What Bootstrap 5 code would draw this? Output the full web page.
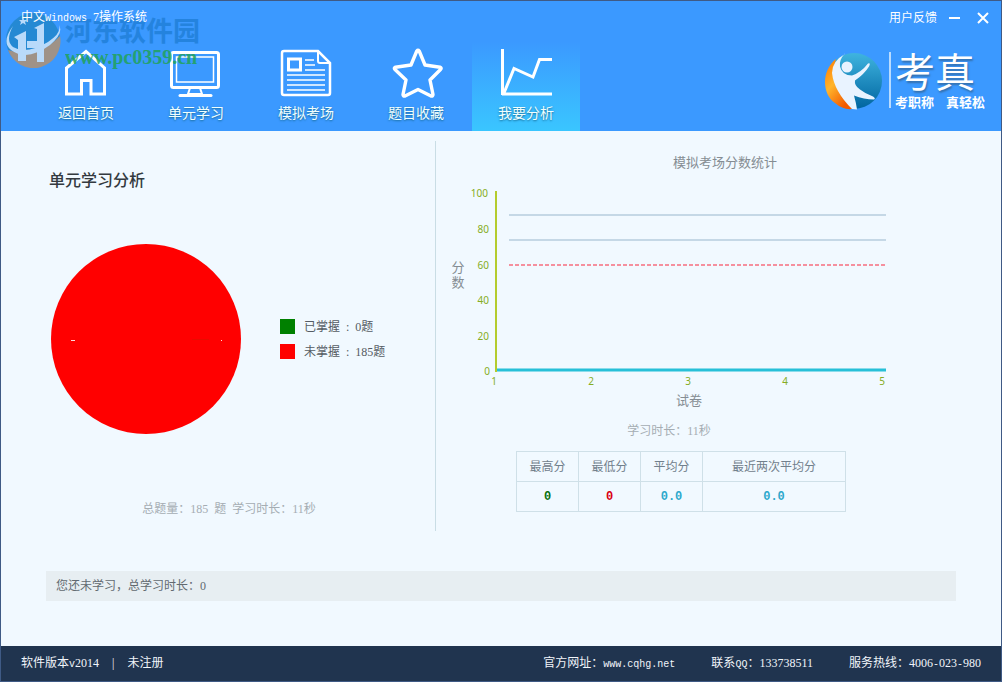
<!DOCTYPE html>
<html lang="zh-CN">
<head>
<meta charset="utf-8">
<meta name="viewport" content="width=device-width, initial-scale=1">
<title>考真 - 我要分析</title>
<link rel="stylesheet" href="https://cdn.jsdelivr.net/npm/bootstrap@5.3.0/dist/css/bootstrap.min.css">
<style>
body{font-family:"Liberation Serif","Noto Sans CJK SC",sans-serif;font-size:12px;line-height:16px;background:#f1f9ff;color:#555c63}
.latin{font-family:"Liberation Mono",monospace;font-size:10px}
.app-frame{border:1px solid #3f5a85;min-height:100vh}
.app-header{background:#3b99ff;color:#fff}
.title-bar{height:30px;padding:4px 12px 0 20px}
.title-bar button{width:12px;height:12px}
.title-text{z-index:2}
.main-nav{padding-left:30px}
.nav-tile{width:108px;height:100px;margin:0 1px;padding-top:16px;color:#f0ffff;font:14px/22px "Noto Sans CJK SC",sans-serif;text-decoration:none;text-shadow:0 1px 2px #14688f}
.nav-tile:hover{color:#fff}
.nav-tile.active{background:linear-gradient(#3b99ff 10%,#3ac6ff)}
.brand-logo{margin:21px 16px 0 0}
.brand-name{font:40px/44px "Noto Sans CJK SC",sans-serif;margin-top:-4px;text-shadow:1px 2px 2px #3570ad}
.brand-line{font:bold 13px/20px "Noto Sans CJK SC",sans-serif;gap:12px}
.brand-text{border-left:2px solid #b9dcff;padding-left:4px;height:56px}
.site-mark{left:4px;top:11px;pointer-events:none}
.site-name{font:bold 27px/36px "Noto Sans CJK SC",sans-serif;color:#1878cd;opacity:.65}
.site-url{font:bold 20px/18px "Liberation Serif",serif;color:#21a35a;opacity:.85}
.panels{display:grid;grid-template-columns:435fr 565fr;padding-top:10px}
.unit-panel{border-right:1px solid #c9dde5;height:390px;padding:28px 26px 0 48px}
.unit-panel h1{font:500 16px/20px "Noto Sans CJK SC",sans-serif;color:#333a40;margin:0}
.pie-row{margin-top:55px;padding-left:2px;gap:39px}
.swatch{width:15px;height:15px}
.legend-list{gap:9px}
.legend-list>div{gap:9px}
.faint{color:#a5adb3}
.unit-total{margin-top:67px}
.exam-panel{padding:13px 0 0 16px}
.exam-body{width:434px;max-width:100%}
.exam-title{font-size:13px;line-height:18px;color:#858d93;padding-left:112px}
.exam-plot{margin-top:-2px}
.exam-time{margin-top:13px}
.score-table{width:330px;margin:12px 0 0 64px;table-layout:fixed}
.score-table th,.score-table td{height:30px;padding:0;border:1px solid #cfe0e8;text-align:center;vertical-align:middle}
.score-table th{font-weight:400;color:#71808c}
.score-table td{font:bold 12px/16px "Liberation Mono",monospace}
.axis-text{font:10px "Noto Sans",sans-serif;fill:#86ad24}
.axis-name{font:13px "Noto Sans CJK SC",sans-serif;fill:#858d93}
.notice{margin:40px 45px 0;padding:7px 10px;background:#e7eef2;color:#626a70}
.app-footer{background:#20344f;color:#f1f5fa;height:35px;padding:1px 20px 0}
.footer-info{gap:13px}
.footer-links{gap:36px}
</style>
</head>
<body>
<div class="app-frame d-flex flex-column position-relative">
<header class="app-header">
  <div class="title-bar d-flex align-items-center justify-content-between">
    <div class="title-text position-relative">中文<span class="latin">Windows</span>&nbsp; 7操作系统</div>
    <div class="d-flex align-items-center">
      <a href="#" class="text-white text-decoration-none me-2">用户反馈</a>
      <button type="button" class="btn p-0 border-0 d-flex ms-1" aria-label="最小化"><svg width="12" height="12"><path d="M0 6h11" stroke="#fff" stroke-width="2"/></svg></button>
      <button type="button" class="btn p-0 border-0 d-flex ms-3" aria-label="关闭"><svg width="12" height="12"><path d="M1 1l10 10M11 1L1 11" stroke="#fff" stroke-width="2"/></svg></button>
    </div>
  </div>
  <div class="d-flex justify-content-between">
    <nav class="main-nav d-flex">
      <a class="nav-tile d-flex flex-column align-items-center" href="#"><svg width="54" height="54" viewBox="0 0 54 54" fill="none" stroke="#fff" stroke-width="3"><path d="M7.500 47V21L27 4.500 45.500 21v26H32V33.500H22.500V47z"/></svg>返回首页</a>
      <a class="nav-tile d-flex flex-column align-items-center" href="#"><svg width="54" height="54" viewBox="0 0 54 54" fill="none" stroke="#fff" stroke-width="3"><rect x="2.500" y="5.500" width="47" height="35" rx="2"/><rect x="7.500" y="10" width="37" height="25" stroke-width="1.500"/><path d="M21 41l-2 6h14l-2-6" stroke-width="2"/><path d="M11 48.500h31" stroke-linecap="round"/></svg>单元学习</a>
      <a class="nav-tile d-flex flex-column align-items-center" href="#"><svg width="54" height="54" viewBox="0 0 54 54" fill="none" stroke="#fff" stroke-width="2.500"><path d="M39 4H5q-2 0-2 2v40q0 2 2 2h44q2 0 2-2V16z"/><path d="M39 4v10q0 2 2 2h9" stroke-width="2"/><rect x="9.500" y="12" width="12" height="11" stroke-width="3"/><path d="M26 13h9M26 18h10M26 23h20M8 28h38M8 33h38M8 38h38M8 43h38" stroke-width="1.500"/></svg>模拟考场</a>
      <a class="nav-tile d-flex flex-column align-items-center" href="#"><svg width="54" height="54" viewBox="0 0 54 54" fill="none" stroke="#fff" stroke-width="3.400" stroke-linejoin="round"><path d="M27.800 4q1.200-1.500 2.400 0L36 18l15 2.200q2 .8.500 2.300L41 33l3 14.500q0 2-2 1.500L29 42.500 16 49q-2 .5-2-1.500L17 33 6 22.500q-1.500-1.500.5-2.300L22 18z"/></svg>题目收藏</a>
      <a class="nav-tile active d-flex flex-column align-items-center" href="#" aria-current="page"><svg width="54" height="54" viewBox="0 0 54 54" fill="none" stroke="#fff" stroke-width="3"><path d="M3.500 2v46M3 47h50M5 46l10-24.500L34 30l6.500-17.500H53"/></svg>我要分析</a>
    </nav>
    <div class="brand-logo d-flex">
      <svg class="me-1" width="60" height="58" viewBox="0 0 60 58" aria-hidden="true">
        <defs><linearGradient id="bl" x1="0" y1="0" x2="0" y2="1"><stop offset="0" stop-color="#3fb4df"/><stop offset="1" stop-color="#00649f"/></linearGradient><linearGradient id="or" x1="0" y1="0" x2=".6" y2="1"><stop offset="0" stop-color="#ff7600"/><stop offset=".5" stop-color="#ffb52b"/><stop offset="1" stop-color="#f35a00"/></linearGradient></defs>
        <circle cx="29" cy="29" r="28" fill="url(#bl)"/>
        <path d="M11 7C-4 19-3 42 10 51q8 7 17 6L17 36Q6 22 11 7z" fill="url(#or)"/>
        <path d="M20 2Q7 9 7 21q2 18 20 36l5 .5q-1-7-3-14 10 4 20 4 2-1-1-3-8-3-13-7-6-4-5-9 9-6 14-14 2-4-1-3-7 9-16 12-10 0-12-9-1-7 5-13z" fill="#e9f3ff"/>
        <circle cx="22" cy="15" r="5.500" fill="#e9f3ff"/>
      </svg>
      <div class="brand-text"><div class="brand-name">考真</div><div class="brand-line d-flex"><span>考职称</span><span>真轻松</span></div></div>
    </div>
  </div>
</header>

<div class="site-mark position-absolute d-flex" aria-hidden="true">
  <svg width="60" height="58" viewBox="0 0 60 58" opacity=".85">
    <circle cx="28" cy="28" r="27" fill="#2287cc"/>
    <path d="M3 38Q32 48 55 24A27 27 0 0 1 3 38z" fill="#b19173"/>
    <path d="M13 43V28l-4-3 12-6v30h-8M32 50V36H22v-7h10V17l-3-1 10-5v39z" fill="#cfe6fa"/>
    <path d="M8 14Q-4 30 6 38q16 12 39-5 14-12 9-20 3 8-11 17-22 13-35 5-8-6 0-21z" fill="#cfe6fa"/>
    <path d="M18 5l1 3h3l-2 2 1 3-3-2-3 2 1-3-2-2h3z" fill="#cfe6fa"/>
  </svg>
  <div><div class="site-name">河东软件园</div><div class="site-url">www.pc0359.cn</div></div>
</div>

<main class="flex-grow-1">
  <div class="panels">
    <section class="unit-panel">
      <h1>单元学习分析</h1>
      <div class="pie-row d-flex align-items-center">
        <svg width="190" height="190" role="img" aria-label="未掌握 185题"><circle cx="95" cy="95" r="95" fill="red"/><path d="M20 96.500h4M170 96.500h1" stroke="#ffd9d9"/><path d="M141 95.500h17" stroke="#e80c00"/></svg>
        <div class="legend-list d-flex flex-column">
          <div class="d-flex align-items-center"><span class="swatch" style="background:#008000"></span><span>已掌握&nbsp; :&nbsp; 0题</span></div>
          <div class="d-flex align-items-center"><span class="swatch" style="background:#ff0000"></span><span>未掌握&nbsp; :&nbsp; 185题</span></div>
        </div>
      </div>
      <div class="unit-total faint text-center">总题量：185&nbsp; 题&nbsp; 学习时长：11秒</div>
    </section>
    <section class="exam-panel">
      <div class="exam-body">
        <div class="exam-title text-center">模拟考场分数统计</div>
        <svg class="exam-plot d-block" width="434" height="240" viewBox="0 0 434 240" role="img" aria-label="模拟考场分数统计">
          <g class="axis-text" text-anchor="end"><text x="36" y="27">100</text><text x="37" y="63">80</text><text x="37" y="99">60</text><text x="37" y="134">40</text><text x="37" y="170">20</text><text x="38" y="205">0</text></g>
          <g class="axis-text" text-anchor="middle"><text x="42" y="215">1</text><text x="139" y="215">2</text><text x="236" y="215">3</text><text x="333" y="215">4</text><text x="430" y="215">5</text></g>
          <path d="M57 45h377M57 70h377" stroke="#c5d8e6" stroke-width="2"/>
          <path d="M57 95h377" stroke="#f5909e" stroke-width="2" stroke-dasharray="4 2"/>
          <path d="M44 21v181" stroke="#b4cc2e" stroke-width="2"/>
          <path d="M45 200h389" stroke="#27c0d8" stroke-width="3"/>
          <g class="axis-name" text-anchor="middle"><text x="6" y="102">分</text><text x="6" y="117">数</text><text x="237" y="235">试卷</text></g>
        </svg>
        <div class="exam-time faint text-center">学习时长：11秒</div>
        <table class="score-table">
          <colgroup><col style="width:62px"><col style="width:62px"><col style="width:62px"><col></colgroup>
          <thead><tr><th scope="col">最高分</th><th scope="col">最低分</th><th scope="col">平均分</th><th scope="col">最近两次平均分</th></tr></thead>
          <tbody><tr><td style="color:#08700e">0</td><td style="color:#d90012">0</td><td style="color:#2ca8cc">0.0</td><td style="color:#2ca8cc">0.0</td></tr></tbody>
        </table>
      </div>
    </section>
  </div>
  <div class="notice">您还未学习，总学习时长：0</div>
</main>

<footer class="app-footer d-flex align-items-center justify-content-between">
  <div class="footer-info d-flex"><span>软件版本<span class="latin">v</span>2014</span><span>|</span><span>未注册</span></div>
  <div class="footer-links d-flex"><span>官方网址：<a href="#" class="latin text-reset text-decoration-none">www.cqhg.net</a></span><span>联系<span class="latin">QQ</span>：133738511</span><span>服务热线：4006<span class="latin">-</span>023<span class="latin">-</span>980</span></div>
</footer>
</div>
<script src="https://cdn.jsdelivr.net/npm/bootstrap@5.3.0/dist/js/bootstrap.bundle.min.js"></script>
</body>
</html>
